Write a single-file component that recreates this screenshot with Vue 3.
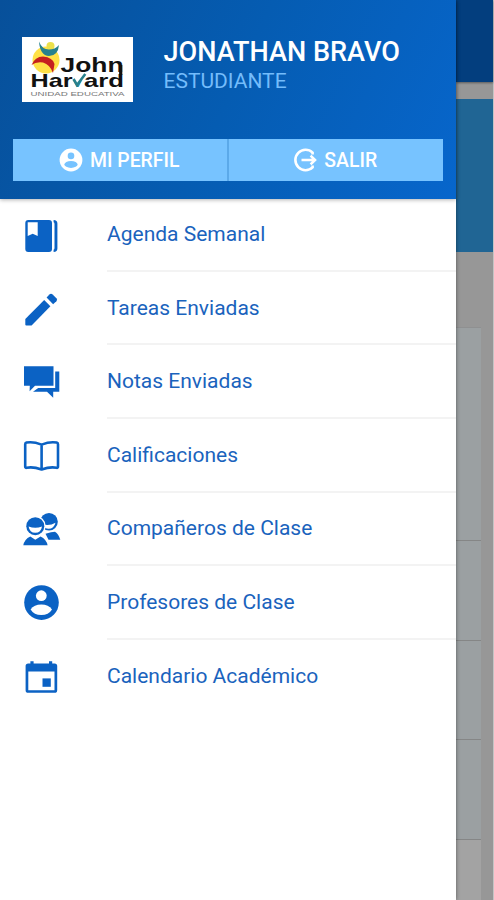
<template>
  <div class="screen">
    <aside class="drawer">
      <header class="drawer-header">
        <div class="user">
          <svg class="school-logo" viewBox="0 0 111 65">
            <rect width="111" height="65" fill="#fff" />
            <circle cx="24" cy="23" r="13.5" fill="#ffe146" />
            <circle cx="28.5" cy="9" r="4" fill="#ece04a" />
            <path d="M17 4.5 Q20 12.5 27 12.5 Q33 12.5 37 8 Q36 19 27 19 Q18 18.5 17 4.5Z" fill="#27818d" />
            <path d="M9.5 28 Q13 19.5 21 19.5 Q31 20.5 32.5 27 L31 36 Q28 27.5 21 25.5 Q14 24.5 9.5 28Z" fill="#c5201f" />
            <g font-family="Liberation Sans, sans-serif" font-weight="bold" fill="#111">
              <text x="38.5" y="34.8" font-size="20" textLength="63" lengthAdjust="spacingAndGlyphs">John</text>
              <text x="8.5" y="49.5" font-size="18.5" textLength="42" lengthAdjust="spacingAndGlyphs">Har</text>
              <text x="62" y="49.5" font-size="18.5" textLength="40" lengthAdjust="spacingAndGlyphs">ard</text>
              <text x="51" y="49.5" font-size="13" font-weight="normal" fill="#27818d" textLength="9" lengthAdjust="spacingAndGlyphs">v</text>
              <text x="8.5" y="58.5" font-size="5.4" font-weight="normal" fill="#777" textLength="94" lengthAdjust="spacingAndGlyphs">UNIDAD EDUCATIVA</text>
            </g>
            <path d="M51.5 42 L55 48 L63.3 37" fill="none" stroke="#27818d" stroke-width="2.6" />
            <path d="M98.7 28 V38" stroke="#111" stroke-width="3.2" />
          </svg>
          <div class="user-info">
            <h1>JONATHAN BRAVO</h1>
            <p>ESTUDIANTE</p>
          </div>
        </div>
        <div class="actions">
          <button class="action">
            <svg width="24" height="24" viewBox="0 0 24 24">
              <circle cx="12" cy="12" r="11.4" fill="#fff" />
              <circle cx="12" cy="7.9" r="3.3" fill="#77c3ff" />
              <ellipse cx="12" cy="16.4" rx="6.6" ry="3.5" fill="#77c3ff" />
            </svg>
            <span>MI PERFIL</span>
          </button>
          <button class="action">
            <svg width="24" height="24" viewBox="0 0 24 24" fill="none" stroke="#fff" stroke-width="2.6">
              <path d="M19.6 6.4 V4.6 A10.2 10.2 0 1 0 19.6 19.4 V17.6" />
              <path d="M8.5 12 H22 M17.6 7.6 L22 12 L17.6 16.4" />
            </svg>
            <span>SALIR</span>
          </button>
        </div>
      </header>
      <nav class="menu">
        <a v-for="item in items" :key="item.label" class="menu-item">
          <svg class="menu-icon" viewBox="0 0 40 40" v-html="item.icon"></svg>
          <span class="menu-label">{{ item.label }}</span>
        </a>
      </nav>
    </aside>
    <!-- Página atenuada detrás del menú -->
    <div class="page">
      <div class="page-bar"></div>
      <div class="page-banner"></div>
      <div class="page-list">
        <div class="page-card first"></div>
        <div class="page-card"></div>
        <div class="page-card"></div>
        <div class="page-card"></div>
        <div class="page-card last"></div>
      </div>
    </div>
  </div>
</template>

<script setup>
// Opciones del menú con su icono
const items = [
  {
    label: 'Agenda Semanal',
    icon: `<path fill-rule="evenodd" d="M7.3 4 H28 Q31 4 31 7 V33 Q31 36 28 36 H7.3 Q4.3 36 4.3 33 V7 Q4.3 4 7.3 4Z M6.7 6.2 V20 L11.7 17.8 L16.7 20 V6.2Z"/>
      <path d="M32.6 4 Q36.4 4.2 36.4 7.5 V32.5 Q36.4 35.8 32.6 36 V33.8 Q33.5 33.5 33.5 32 V8 Q33.5 6.5 32.6 6.2Z"/>`
  },
  {
    label: 'Tareas Enviadas',
    icon: `<path d="M4.3 29 L23.2 10 L29.4 16.2 L10.6 35.6 H5.3 Q4.3 35.6 4.3 34.6Z"/>
      <path d="M25.6 7.6 L28.4 4.5 Q30 3 31.6 4.5 L35.4 8.2 Q36.9 9.8 35.4 11.3 L32.1 14.2Z"/>`
  },
  {
    label: 'Notas Enviadas',
    icon: `<path d="M3 3.3 H32.5 V22.8 H14 L8.6 28.3 L8.8 22.8 H3Z"/>
      <path d="M34.2 8.6 H38.3 V28.8 H32.2 V34.8 L26 28.8 H12 L17.2 25 H34.2Z"/>`
  },
  {
    label: 'Calificaciones',
    icon: `<path fill="none" stroke="#0b62c4" stroke-width="2.6" stroke-linejoin="round" d="M20.6 7.6 Q12 4.3 5.5 5.6 Q4.2 5.9 4.2 7.2 V29.6 Q4.2 31 5.6 30.8 Q12 29.5 20.6 32.4 Q29.2 29.5 35.6 30.8 Q37 31 37 29.6 V7.2 Q37 5.9 35.7 5.6 Q29.2 4.3 20.6 7.6 V32"/>`
  },
  {
    label: 'Compañeros de Clase',
    icon: `<circle cx="28" cy="11.8" r="8.8"/>
      <path fill="#fff" d="M22 14.5 Q29 16 34.5 12.8 Q33 18.8 27.5 18.8 Q23.5 18.8 22 14.5Z"/>
      <path d="M24.5 23.8 L30 22.2 L34 21.8 Q37.5 24 39.3 29.8 H27.5Z"/>
      <circle cx="14.3" cy="16.2" r="10.4" fill="#fff"/>
      <circle cx="14.3" cy="16.2" r="9"/>
      <path fill="#fff" d="M7.6 16.5 Q14.3 19.2 21 16.5 Q20 22.8 14.3 22.8 Q8.6 22.8 7.6 16.5Z"/>
      <path stroke="#fff" stroke-width="1.4" paint-order="stroke" d="M2.3 35.3 Q3.3 29.2 9.3 26.4 L14.3 29.8 L19.5 26.4 Q25.5 29.2 26.6 35.3Z"/>`
  },
  {
    label: 'Profesores de Clase',
    icon: `<circle cx="20.5" cy="18.6" r="17.3"/>
      <circle cx="20.3" cy="11.7" r="5.4" fill="#fff"/>
      <path fill="#fff" d="M9.6 25.4 Q13 20.4 20.3 20.4 Q27.6 20.4 31 25.4 Q27.6 31 20.3 31 Q13 31 9.6 25.4Z"/>`
  },
  {
    label: 'Calendario Académico',
    icon: `<path fill-rule="evenodd" d="M9.4 3.3 H12.6 V5.5 H28 V3.3 H31.2 V5.5 H33.6 Q36.2 5.5 36.2 8 V32.2 Q36.2 34.8 33.6 34.8 H7.2 Q4.6 34.8 4.6 32.2 V8 Q4.6 5.5 7.2 5.5 H9.4Z M7.3 13.6 V32.2 H33.5 V13.6Z"/>
      <path d="M21.5 20.4 H29.8 V28.8 H21.5Z"/>`
  }
]
</script>

<style>
body {
  margin: 0;
  overflow: hidden;
}
</style>

<style scoped>
.screen {
  display: flex;
  width: 494px;
  height: 900px;
  overflow: hidden;
  font-family: Roboto, sans-serif;
  background: #999;
}

.drawer {
  position: relative;
  z-index: 1;
  flex: none;
  width: 456px;
  background: #fff;
  box-shadow: 0 0 4px rgba(0, 0, 0, 0.45);
}

.drawer-header {
  box-sizing: border-box;
  height: 199px;
  padding: 37px 13px 0;
  background: linear-gradient(115deg, #07509a 0%, #055cb2 50%, #0766cc 100%);
  box-shadow: 0 1px 4px rgba(0, 0, 0, 0.3);
}

.user {
  display: flex;
  height: 102px;
  padding-left: 8.5px;
}

.school-logo {
  width: 111px;
  height: 65px;
}

.user-info {
  margin-left: 31px;
  white-space: nowrap;
}

h1 {
  margin: 0;
  font-size: 27.1px;
  font-weight: 500;
  line-height: 30px;
  color: #fff;
}

.user-info p {
  margin: 1px 0 0;
  font-size: 21px;
  line-height: 26px;
  color: #74bcfb;
}

.actions {
  display: flex;
  gap: 2px;
  width: 430px;
  height: 42px;
  background: #5ba9e9;
}

.action {
  display: flex;
  flex: 1;
  align-items: center;
  justify-content: center;
  gap: 7.5px;
  padding: 0 2px 0 0;
  border: 0;
  font-family: inherit;
  font-size: 19.4px;
  font-weight: 500;
  color: #fff;
  background: #77c3ff;
}

.menu {
  display: flex;
  flex-direction: column;
  margin-top: -0.8px;
}

.menu-item {
  display: flex;
  height: 73.6px;
  padding-left: 21px;
}

.menu-icon {
  flex: none;
  width: 40px;
  height: 40px;
  margin-top: 17.8px;
  fill: #0b62c4;
}

.menu-label {
  display: flex;
  flex: 1;
  align-items: center;
  box-sizing: border-box;
  margin-left: 46px;
  border-bottom: 2px solid #f3f3f3;
  font-size: 21px;
  color: #1a63bd;
}

.menu-item:last-child .menu-label {
  border-bottom-color: transparent;
}

.page {
  flex: none;
  box-sizing: border-box;
  width: 38px;
  border-right: 1px solid #c4c4c4;
  background: #979797;
}

.page-bar {
  height: 82px;
  background: #033e7e;
  box-shadow: 0 1px 2px rgba(0, 0, 0, 0.4);
}

.page-banner {
  height: 153px;
  margin-top: 17px;
  background: #206594;
}

.page-list {
  width: 25px;
  margin-top: 75px;
}

.page-card {
  box-sizing: border-box;
  height: 99.5px;
  border-bottom: 1px solid #858686;
  background: #9ba0a2;
}

.page-card.first {
  height: 214px;
  border-top: 1px solid #8f9091;
}

.page-card.last {
  background: #a3a3a3;
}
</style>
